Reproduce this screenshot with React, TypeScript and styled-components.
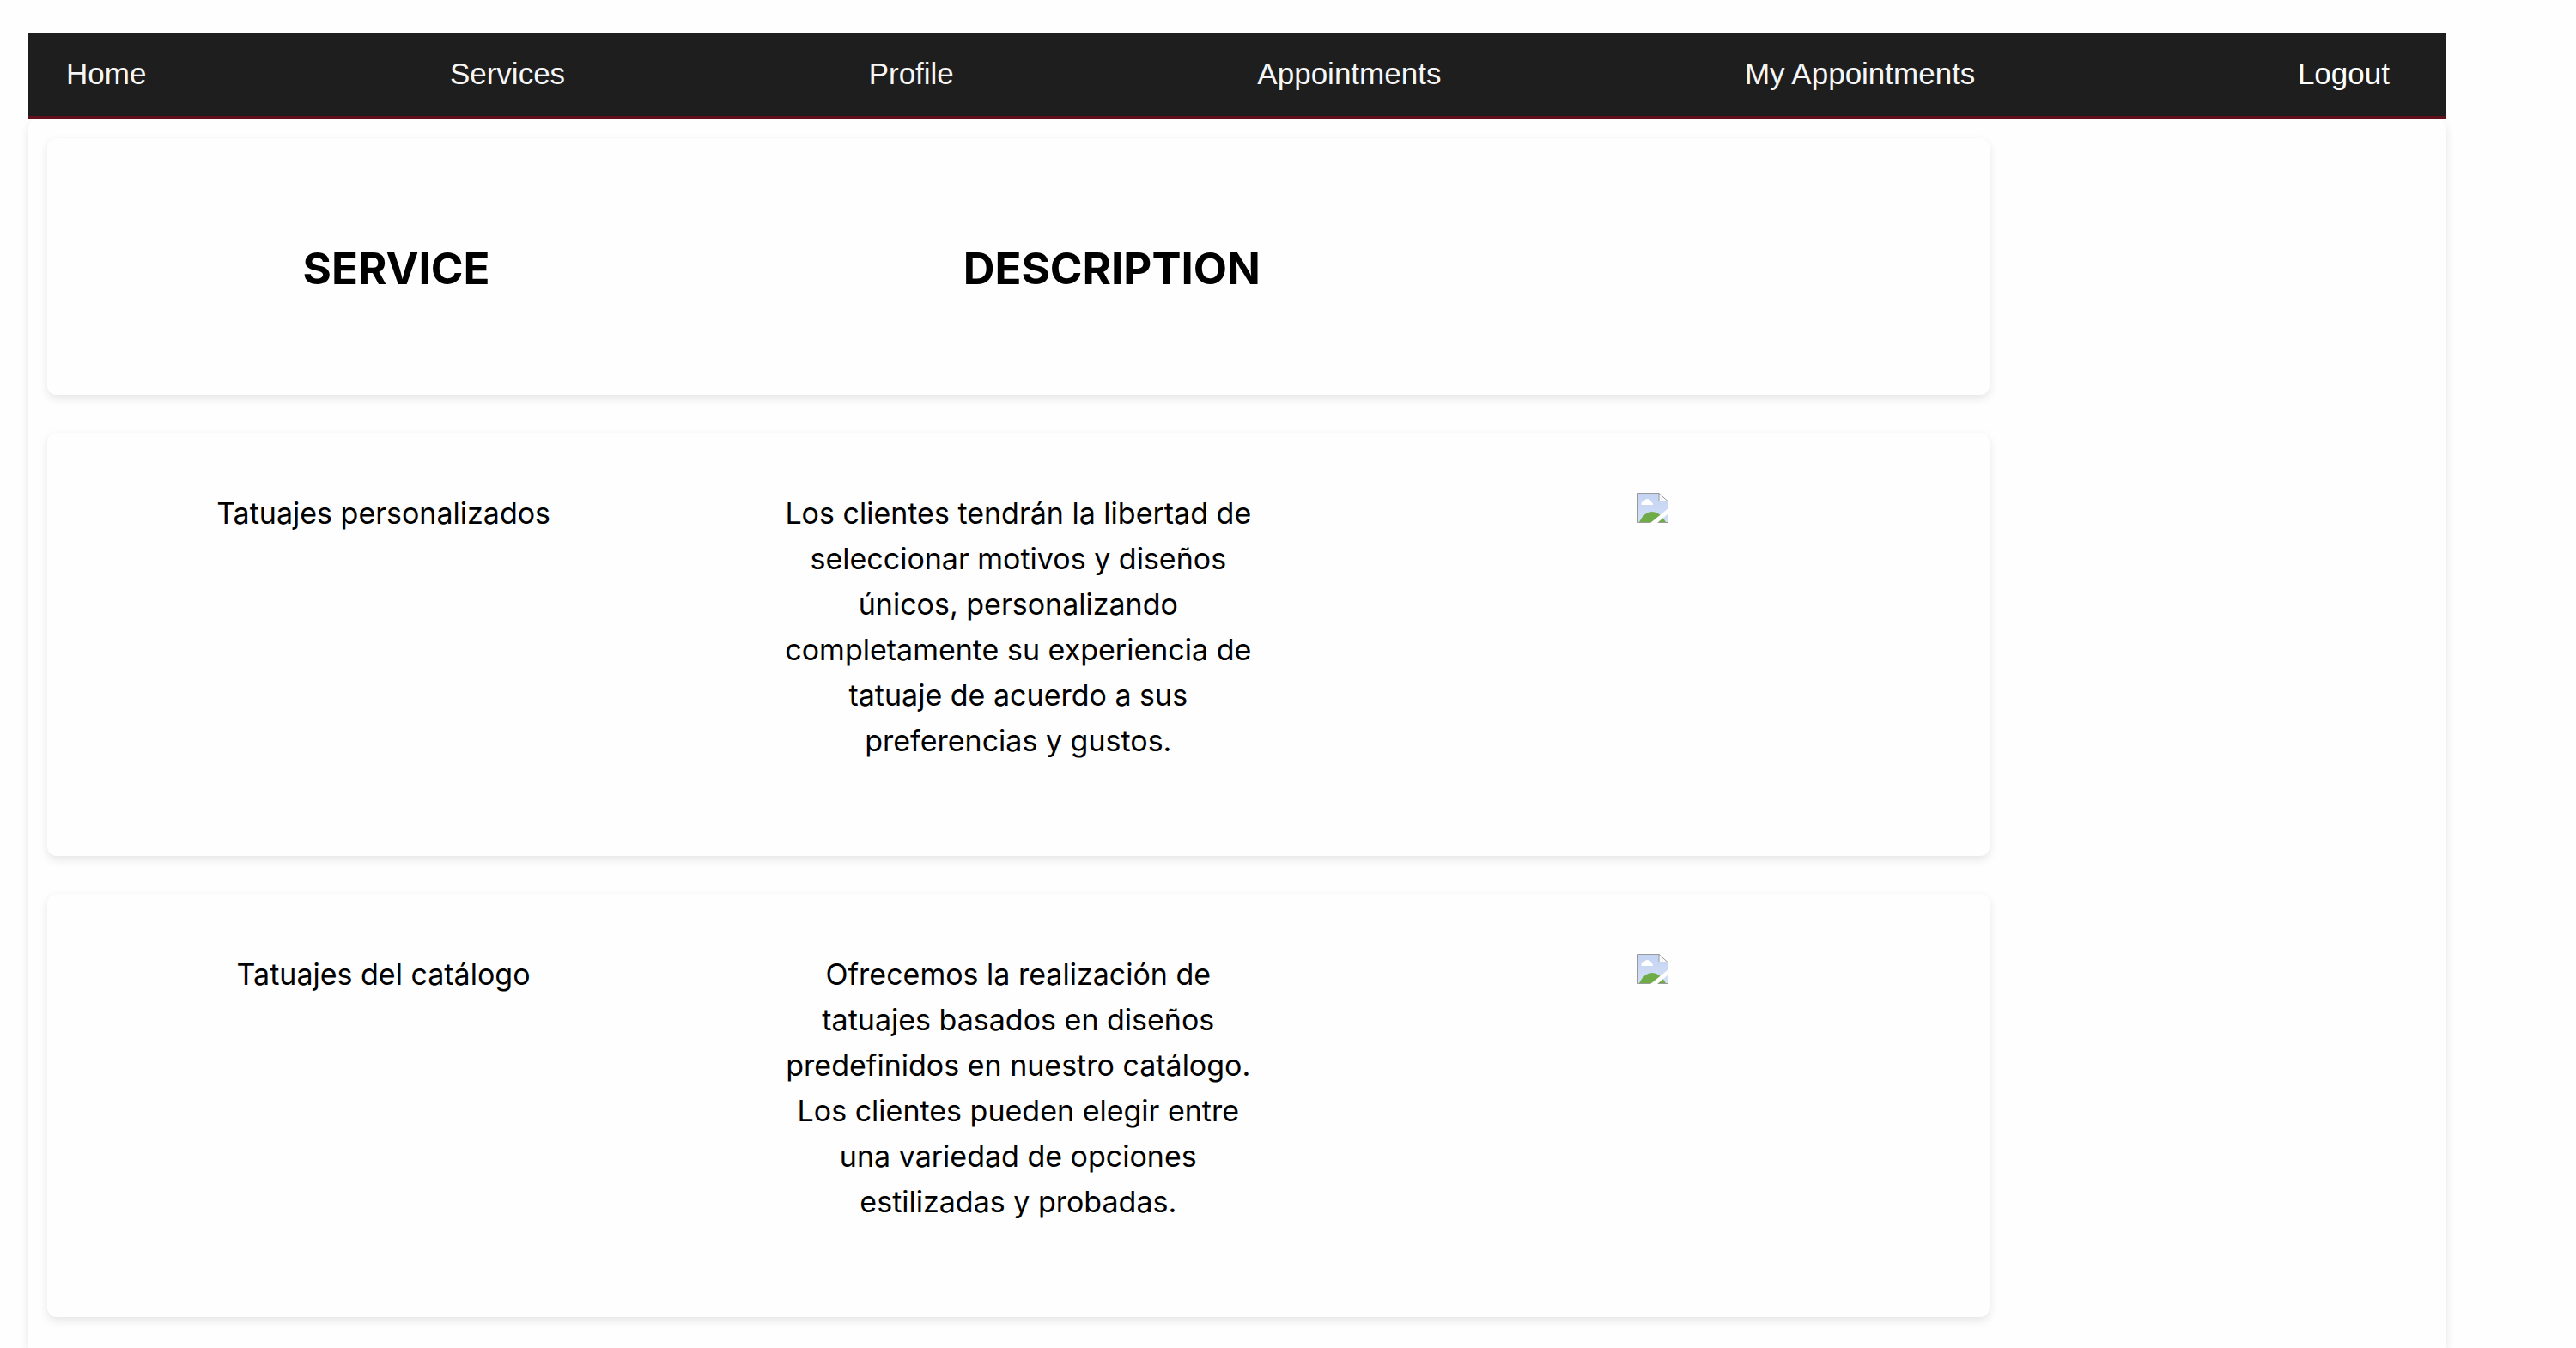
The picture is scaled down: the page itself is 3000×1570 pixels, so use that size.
import React from "react";
import styled, { createGlobalStyle } from "styled-components";

const GlobalStyle = createGlobalStyle`
  body {
    margin: 0;
    background: #fefefe;
    color: #000000;
    font-family: Inter, "Liberation Sans", sans-serif;
    font-size: 34px;
    line-height: 53px;
  }
`;

const Page = styled.div`
  display: flex;
  flex-direction: column;
  box-sizing: border-box;
  min-height: 100vh;
  padding: 38px 151px 0 33px;
`;

const NavBar = styled.nav`
  display: flex;
  justify-content: space-between;
  align-items: center;
  padding: 21px 44px 23px;
  background: #1e1e1e;
  border-bottom: 4px solid #64111c;
  font-family: "Liberation Sans", Arial, sans-serif;
  font-size: 35px;
`;

const NavLink = styled.a`
  color: #f6f6f6;
  text-decoration: none;
`;

const LogoutButton = styled.button`
  margin: 0;
  padding: 0 22px;
  border: 0;
  background: none;
  color: #ffffff;
  font: inherit;
  cursor: pointer;
`;

const Panel = styled.main`
  display: flex;
  flex: 1;
  flex-direction: column;
  gap: 44px;
  padding: 22px;
  border-radius: 11px 11px 0 0;
  box-shadow: 0 4px 11px rgba(0, 0, 0, 0.1);
`;

const Card = styled.section`
  display: flex;
  width: 80%;
  padding: 22px;
  border-radius: 11px;
  background: #fefefe;
  box-shadow: 0 4px 11px rgba(0, 0, 0, 0.1);
`;

const HeaderCard = styled(Card)`
  justify-content: space-around;
`;

const Title = styled.h2`
  margin: 0;
  padding: 90px 0 86px;
  font-size: 51px;
  font-weight: 700;
  line-height: 79px;
`;

const Cell = styled.div`
  flex: 1;
  box-sizing: border-box;
  min-width: 0;
  padding: 45px 88px 86px;
  text-align: center;
`;

const Text = styled.p`
  margin: 0;
`;

const MissingPicture = styled.svg`
  display: block;
  width: 36px;
  height: 35px;
  margin: 3px auto 0;
`;

const BrokenImage = () => (
  <MissingPicture viewBox="0 0 36 35" aria-hidden="true">
    <defs>
      <linearGradient id="sky" x1="0" y1="0" x2="0" y2="1">
        <stop offset="0" stopColor="#c3d3f3" />
        <stop offset="1" stopColor="#d3dff6" />
      </linearGradient>
    </defs>
    <path d="M0.5 0.5H25L35.5 10V34.5H0.5Z" fill="url(#sky)" />
    <path
      d="M4.500 14V11.500Q5 10 7.500 10Q8.500 7 11.500 7Q15 7 16 10.500Q18 11 18 14Z"
      fill="#ffffff"
    />
    <path d="M2 34Q8 22 17 22Q26 22 33 34Z" fill="#6fac47" />
    <path d="M25 0.500V9.500H35.500Z" fill="#f8f8f8" />
    <path d="M25 0.500V9.500H35.500" fill="none" stroke="#999999" />
    <path
      d="M0.500 34.500V0.500H25L35.500 10V34.500Z"
      fill="none"
      stroke="#999999"
    />
    <path d="M36 18V24L23 35H15Z" fill="#fefefe" />
  </MissingPicture>
);

const links = ["Home", "Services", "Profile", "Appointments", "My Appointments"];

const services = [
  {
    name: "Tatuajes personalizados",
    description:
      "Los clientes tendrán la libertad de seleccionar motivos y diseños únicos, personalizando completamente su experiencia de tatuaje de acuerdo a sus preferencias y gustos.",
  },
  {
    name: "Tatuajes del catálogo",
    description:
      "Ofrecemos la realización de tatuajes basados en diseños predefinidos en nuestro catálogo. Los clientes pueden elegir entre una variedad de opciones estilizadas y probadas.",
  },
];

export default function App() {
  return (
    <>
      <GlobalStyle />
      <Page>
        <NavBar>
          {links.map((label) => (
            <NavLink key={label} href="#">
              {label}
            </NavLink>
          ))}
          <LogoutButton type="button">Logout</LogoutButton>
        </NavBar>
        <Panel>
          <HeaderCard>
            <Title>SERVICE</Title>
            <Title>DESCRIPTION</Title>
            <Title as="div" />
          </HeaderCard>
          {services.map((service) => (
            <Card key={service.name}>
              <Cell>
                <Text>{service.name}</Text>
              </Cell>
              <Cell>
                <Text>{service.description}</Text>
              </Cell>
              <Cell>
                <BrokenImage />
              </Cell>
            </Card>
          ))}
        </Panel>
      </Page>
    </>
  );
}
